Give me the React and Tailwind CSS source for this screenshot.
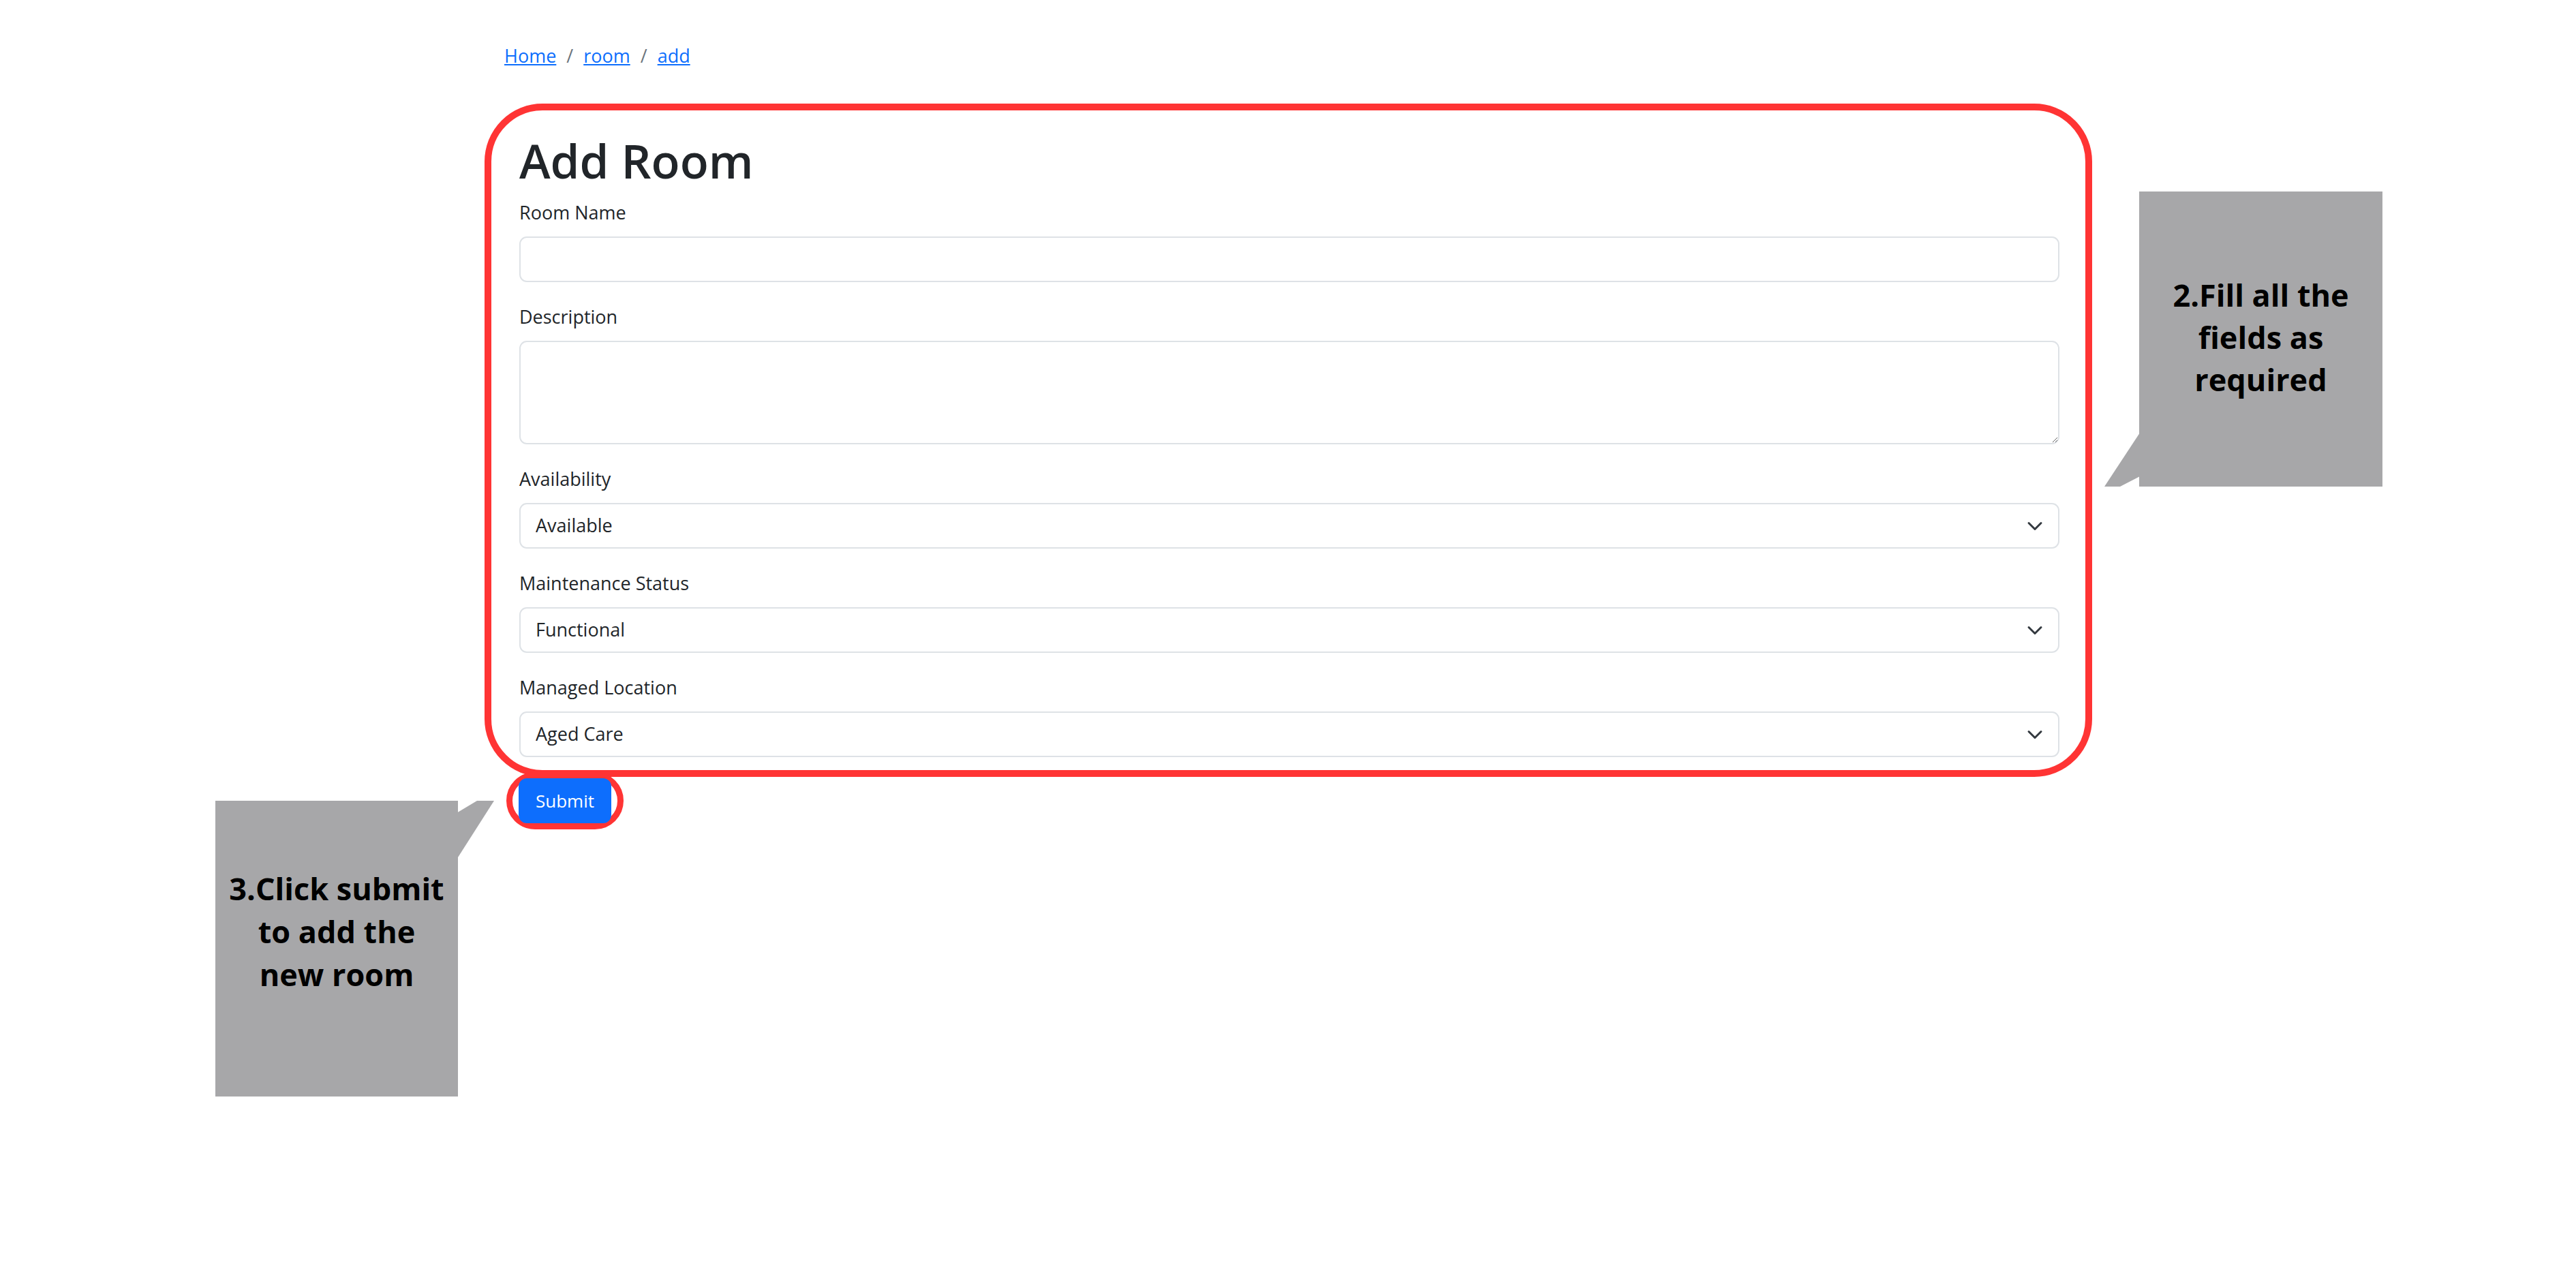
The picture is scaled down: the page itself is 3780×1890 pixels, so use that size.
/**
 * Add Room form with tutorial annotations (red outlines + grey callouts).
 */

const FONT = "font-['Open_Sans','Noto_Sans',sans-serif]";

function Label({ children }) {
  return (
    <label className="block h-[40px] text-[27px] leading-[40px] text-[#212529] mb-[15px]">
      {children}
    </label>
  );
}

function Chevron() {
  return (
    <svg
      className="absolute right-[24px] top-1/2 -translate-y-1/2 w-[24px] h-[24px] pointer-events-none"
      viewBox="0 0 16 16"
      fill="none"
      stroke="#343a40"
      strokeWidth="2"
      strokeLinecap="round"
      strokeLinejoin="round"
    >
      <path d="m2 5 6 6 6-6" />
    </svg>
  );
}

function SelectField({ label, value, options }) {
  return (
    <div className="mb-[31px] last:mb-0">
      <Label>{label}</Label>
      <div className="relative">
        <select
          defaultValue={value}
          className="appearance-none w-full h-[67px] border-2 border-[#dee2e6] rounded-[11px] bg-white pl-[22px] pr-[70px] text-[27px] text-[#212529] outline-none"
        >
          {options.map((o) => (
            <option key={o}>{o}</option>
          ))}
        </select>
        <Chevron />
      </div>
    </div>
  );
}

export default function App() {
  return (
    <div className={`relative w-[3780px] h-[1890px] bg-white ${FONT}`}>
      <div className="ml-[711px] w-[2359px] pt-[62px]">
        {/* breadcrumb */}
        <nav className="ml-[29px] flex items-center h-[40px] text-[27px] leading-[40px]">
          <a href="#" className="text-[#0d6efd] underline">Home</a>
          <span className="px-[15px] text-[#6c757d]">/</span>
          <a href="#" className="text-[#0d6efd] underline">room</a>
          <span className="px-[15px] text-[#6c757d]">/</span>
          <a href="#" className="text-[#0d6efd] underline">add</a>
        </nav>

        {/* form, outlined in red */}
        <div className="mt-[50px] border-[10px] border-[#ff3434] rounded-[85px] pl-[41px] pr-[38px] pt-[30px] pb-[19px]">
          <h1 className="text-[69px] leading-[86px] font-semibold text-[#212529] mb-[14px]">
            Add Room
          </h1>

          <div className="mb-[31px]">
            <Label>Room Name</Label>
            <input
              type="text"
              className="block w-full h-[67px] border-2 border-[#dee2e6] rounded-[11px] px-[22px] text-[27px] outline-none"
            />
          </div>

          <div className="mb-[31px]">
            <Label>Description</Label>
            <textarea className="block w-full h-[152px] border-2 border-[#dee2e6] rounded-[11px] px-[22px] py-[10px] text-[27px] outline-none" />
          </div>

          <SelectField
            label="Availability"
            value="Available"
            options={["Available", "Unavailable"]}
          />
          <SelectField
            label="Maintenance Status"
            value="Functional"
            options={["Functional", "Under Maintenance"]}
          />
          <SelectField
            label="Managed Location"
            value="Aged Care"
            options={["Aged Care", "Disability Care"]}
          />
        </div>

        {/* submit, circled in red */}
        <div className="ml-[32px] -mt-[7px] inline-flex border-[9px] border-[#ff3434] rounded-[42px] px-[9px]">
          <button className="w-[136px] h-[66px] rounded-[12px] bg-[#0d6efd] text-white text-[26px]">
            Submit
          </button>
        </div>
      </div>

      {/* callout: fill fields */}
      <div className="absolute left-[3139px] top-[281px] w-[357px] h-[433px] bg-[#a7a7a9] flex items-center justify-center">
        <p className="text-center text-[45px] leading-[62px] font-bold text-black pb-[6px]">
          2.Fill all the
          <br />
          fields as
          <br />
          required
        </p>
      </div>
      <svg className="absolute left-[3086px] top-[630px]" width="56" height="84" viewBox="0 0 56 84">
        <polygon points="56,2 2,84 25,84 56,68" fill="#a7a7a9" />
      </svg>

      {/* callout: click submit */}
      <div className="absolute left-[316px] top-[1175px] w-[356px] h-[434px] bg-[#a7a7a9] flex justify-center pt-[97px]">
        <p className="text-center text-[45px] leading-[63px] font-bold text-black">
          3.Click submit
          <br />
          to add the
          <br />
          new room
        </p>
      </div>
      <svg className="absolute left-[670px] top-[1175px]" width="56" height="84" viewBox="0 0 56 84">
        <polygon points="0,18 30,0 55,0 2,83 0,83" fill="#a7a7a9" />
      </svg>
    </div>
  );
}
